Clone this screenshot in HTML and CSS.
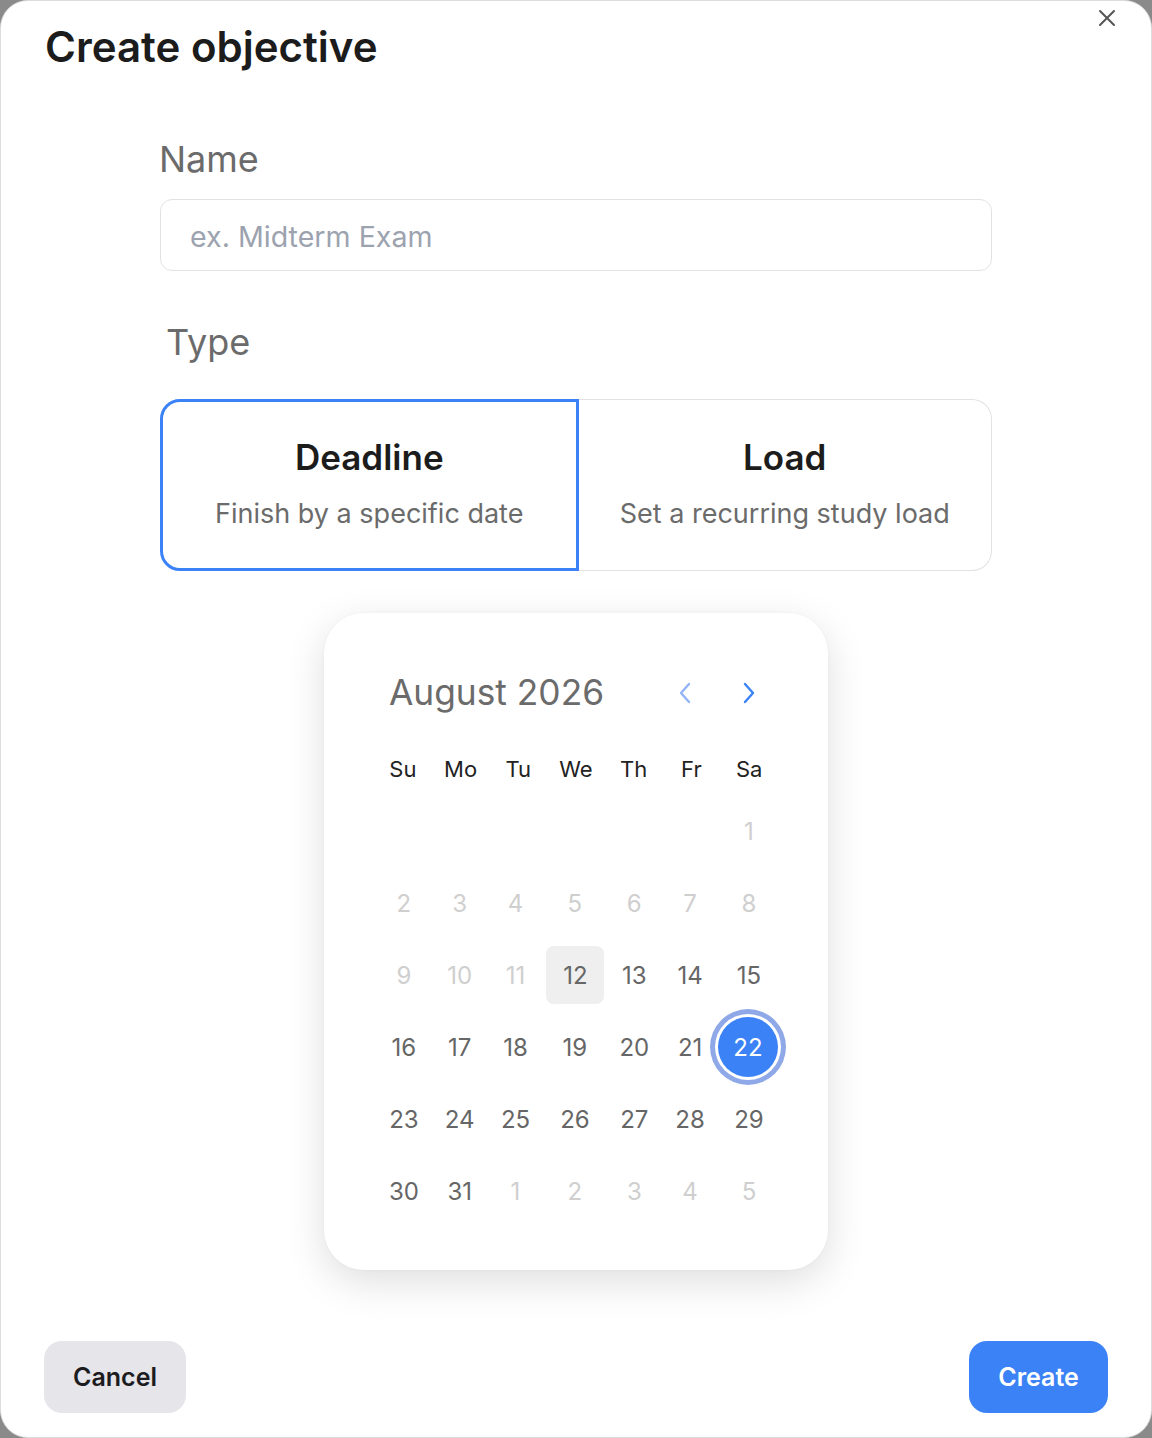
FILE: index.html
```html
<!DOCTYPE html>
<html lang="en">
<head>
<meta charset="utf-8">
<title>Create objective</title>
<link rel="stylesheet" href="styles.css">
</head>
<body>
<div class="dialog">
  <button class="close" aria-label="Close">
    <svg width="18" height="18" viewBox="0 0 18 18"><path d="M2 2 L16 16 M16 2 L2 16" stroke="#555" stroke-width="2" stroke-linecap="round" fill="none"/></svg>
  </button>
  <h1 class="title">Create objective</h1>
  <div class="form">
    <label class="label">Name</label>
    <input class="input" type="text" placeholder="ex. Midterm Exam">
    <div class="label label-type">Type</div>
    <div class="types">
      <div class="type type-active">
        <div class="type-title">Deadline</div>
        <div class="type-sub">Finish by a specific date</div>
      </div>
      <div class="type type-load">
        <div class="type-title">Load</div>
        <div class="type-sub">Set a recurring study load</div>
      </div>
    </div>
    <div class="cal-wrap">
      <div class="calendar">
        <div class="cal-head">
          <div class="cal-month">August 2026</div>
          <div class="cal-nav">
            <svg class="nav-prev" width="14" height="24" viewBox="0 0 14 24"><path d="M11 3 L3 12 L11 21" stroke="#93b4f7" stroke-width="2.4" stroke-linecap="round" stroke-linejoin="round" fill="none"/></svg>
            <svg class="nav-next" width="14" height="24" viewBox="0 0 14 24"><path d="M3 3 L11 12 L3 21" stroke="#3b82f6" stroke-width="2.4" stroke-linecap="round" stroke-linejoin="round" fill="none"/></svg>
          </div>
        </div>
        <div class="cal-week">
          <span>Su</span><span>Mo</span><span>Tu</span><span>We</span><span>Th</span><span>Fr</span><span>Sa</span>
        </div>
        <div class="cal-grid">
          <span></span><span></span><span></span><span></span><span></span><span></span><span class="d off">1</span>
          <span class="d off">2</span><span class="d off">3</span><span class="d off">4</span><span class="d off">5</span><span class="d off">6</span><span class="d off">7</span><span class="d off">8</span>
          <span class="d off">9</span><span class="d off">10</span><span class="d off">11</span><span class="d today">12</span><span class="d">13</span><span class="d">14</span><span class="d">15</span>
          <span class="d">16</span><span class="d">17</span><span class="d">18</span><span class="d">19</span><span class="d">20</span><span class="d">21</span><span class="d sel"><span class="dot">22</span></span>
          <span class="d">23</span><span class="d">24</span><span class="d">25</span><span class="d">26</span><span class="d">27</span><span class="d">28</span><span class="d">29</span>
          <span class="d">30</span><span class="d">31</span><span class="d off">1</span><span class="d off">2</span><span class="d off">3</span><span class="d off">4</span><span class="d off">5</span>
        </div>
      </div>
    </div>
  </div>
  <div class="footer">
    <button class="btn btn-cancel">Cancel</button>
    <button class="btn btn-create">Create</button>
  </div>
</div>
</body>
</html>
```
FILE: styles.css
```css
* { box-sizing: border-box; }
html, body { margin: 0; padding: 0; }
body {
  background: #8a8a8a;
  font-family: Inter, "Noto Sans", sans-serif;
  width: 1152px;
  height: 1438px;
  overflow: hidden;
}
.dialog {
  position: relative;
  width: 1152px;
  height: 1438px;
  background: #fff;
  border: 1px solid #dcdcdc;
  border-radius: 28px;
  display: flex;
  flex-direction: column;
}
.close {
  position: absolute;
  top: 8px;
  right: 35px;
  width: 18px;
  height: 18px;
  padding: 0;
  border: 0;
  background: none;
  display: flex;
}
.title {
  margin: 0;
  padding: 21px 0 0 44px;
  font-size: 42px;
  line-height: 50px;
  font-weight: 600;
  color: #1c1c1c;
  letter-spacing: 0;
}
.form {
  padding: 0 159px;
  display: flex;
  flex-direction: column;
}
.label {
  display: block;
  margin-top: 65px;
  margin-left: -1px;
  font-size: 36px;
  line-height: 44px;
  font-weight: 400;
  color: #6b6b6b;
}
.input {
  margin-top: 18px;
  height: 72px;
  width: 100%;
  border: 1px solid #e2e2e2;
  border-radius: 12px;
  padding: 3px 29px 0;
  font-family: inherit;
  font-size: 28.6px;
  color: #222;
  background: #fff;
  outline: none;
}
.input::placeholder { color: #9ca3af; }
.label-type {
  margin-top: 49px;
  padding-left: 7px;
}
.types {
  margin-top: 35px;
  display: flex;
  height: 172px;
}
.type {
  flex: 1;
  display: flex;
  flex-direction: column;
  align-items: center;
  justify-content: center;
  gap: 19px;
  padding-bottom: 3px;
}
.type-active {
  border: 3px solid #3b82f6;
  border-radius: 20px 0 0 20px;
}
.type-load {
  border: 1px solid #e2e2e2;
  border-left: 0;
  border-radius: 0 20px 20px 0;
}
.type-title {
  font-size: 35px;
  line-height: 42px;
  font-weight: 600;
  color: #1c1c1c;
}
.type-sub {
  font-size: 27px;
  line-height: 34px;
  color: #6b6b6b;
}
.cal-wrap {
  margin-top: 42px;
  display: flex;
  justify-content: center;
}
.calendar {
  width: 504px;
  height: 657px;
  background: #fff;
  border-radius: 40px;
  box-shadow: 0 12px 40px rgba(0, 0, 0, 0.13), 0 0 4px rgba(0,0,0,0.03);
  padding: 60px 50px 50px;
}
.cal-head {
  height: 40px;
  display: flex;
  align-items: center;
  justify-content: space-between;
  padding: 0 22px 0 15px;
}
.cal-month {
  font-size: 35.3px;
  line-height: 40px;
  color: #6b6b6b;
}
.cal-nav {
  display: flex;
  gap: 50px;
  align-items: center;
}
.cal-week {
  margin-top: 41px;
  display: grid;
  grid-template-columns: repeat(7, 1fr);
  height: 30px;
  align-items: center;
}
.cal-week span {
  text-align: center;
  font-size: 22px;
  line-height: 30px;
  color: #222;
}
.cal-grid {
  margin-top: 18px;
  display: grid;
  grid-template-columns: repeat(7, 1fr);
  grid-auto-rows: 58px;
  row-gap: 14px;
}
.d {
  display: flex;
  align-items: center;
  justify-content: center;
  font-size: 24px;
  color: #666;
  padding-left: 4px;
}
.d.off { color: #cfcfcf; }
.d.today {
  background: #efefef;
  border-radius: 8px;
  width: 58px;
  justify-self: center;
  margin-left: 5px;
  padding-left: 0;
}
.d.sel { padding-left: 2px; }
.dot {
  width: 60px;
  height: 60px;
  flex: none;
  border-radius: 50%;
  background: #3b82f6;
  color: #fff;
  display: flex;
  align-items: center;
  justify-content: center;
  box-shadow: 0 0 0 3px #fff, 0 0 0 8px #8fa9e8;
}
.footer {
  margin-top: auto;
  display: flex;
  justify-content: space-between;
  padding: 0 43px 24px;
}
.btn {
  height: 72px;
  border: 0;
  border-radius: 18px;
  font-family: inherit;
  font-size: 25px;
  font-weight: 600;
}
.btn-cancel {
  width: 142px;
  background: #e5e5ea;
  color: #1c1c1e;
}
.btn-create {
  width: 139px;
  background: #3b82f6;
  color: #fff;
}
```
